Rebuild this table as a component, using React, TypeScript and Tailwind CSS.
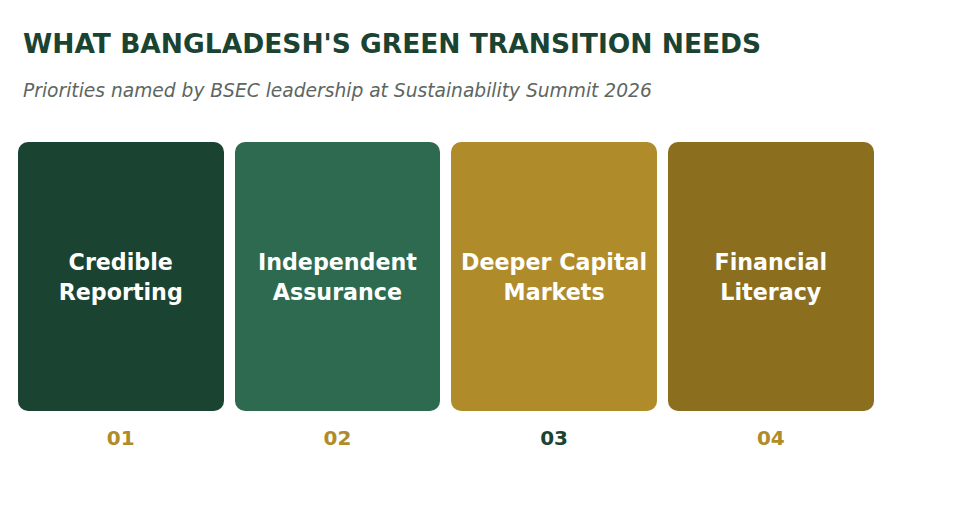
const priorities = [
  { id: "01", label: ["Credible", "Reporting"], bg: "bg-[#1b4332]", num: "text-[#b08b2a]" },
  { id: "02", label: ["Independent", "Assurance"], bg: "bg-[#2d6a4f]", num: "text-[#b08b2a]" },
  { id: "03", label: ["Deeper Capital", "Markets"], bg: "bg-[#b08b2a]", num: "text-[#1b4332]" },
  { id: "04", label: ["Financial", "Literacy"], bg: "bg-[#8b6f1f]", num: "text-[#b08b2a]" },
];

const App = () => {
  return (
    <div className="w-[969px] h-[506px] bg-white font-['DejaVu_Sans',sans-serif] overflow-hidden">
      {/* 제목 영역 */}
      <div className="pl-[23px] pt-[29px]">
        <h1 className="text-[26.5px] leading-[30px] font-bold text-[#1b4332]">
          WHAT BANGLADESH'S GREEN TRANSITION NEEDS
        </h1>
        <p className="mt-[20.5px] text-[18.65px] leading-[22px] italic text-[#5c6662]">
          Priorities named by BSEC leadership at Sustainability Summit 2026
        </p>
      </div>

      {/* 카드 목록 */}
      <div className="flex gap-[11.2px] pl-[18px] mt-[40.5px]">
        {priorities.map((p) => (
          <div key={p.id} className="flex flex-col items-center w-[205.5px]">
            <div
              className={`${p.bg} w-full h-[269px] rounded-[10px] flex flex-col items-center justify-center text-white font-bold text-[22.2px] leading-[30px] text-center`}
            >
              {p.label.map((line) => (
                <span key={line}>{line}</span>
              ))}
            </div>
            <span className={`${p.num} mt-[15px] text-[20px] leading-[24px] font-bold`}>
              {p.id}
            </span>
          </div>
        ))}
      </div>
    </div>
  );
};

export default App;
